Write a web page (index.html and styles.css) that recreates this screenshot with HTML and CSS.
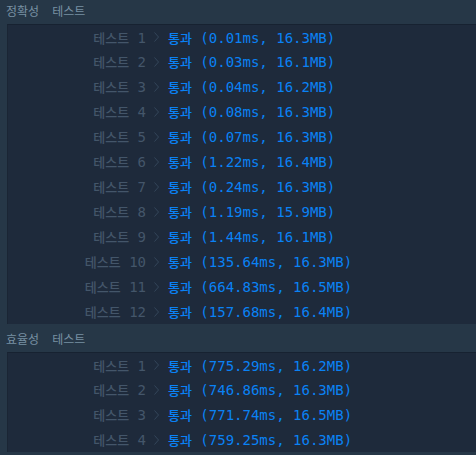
FILE: index.html
```html
<!DOCTYPE html>
<html lang="ko">
<head>
    <meta charset="UTF-8">
    <meta name="viewport" content="width=device-width, initial-scale=1.0">
    <title>채점 결과</title>
    <link rel="stylesheet" href="styles.css">
</head>
<body>
    <div class="result">
        <div class="section-title"><span>정확성</span><span>테스트</span></div>
        <div class="panel">
            <div class="row"><span class="label"><span class="ko">테스트</span> 1</span><svg class="chev" width="5" height="10" viewBox="0 0 5 10"><polyline points="0.5,0.5 4.5,5 0.5,9.5"/></svg><span class="pass"><span class="ko">통과</span> (0.01ms, 16.3MB)</span></div>
            <div class="row"><span class="label"><span class="ko">테스트</span> 2</span><svg class="chev" width="5" height="10" viewBox="0 0 5 10"><polyline points="0.5,0.5 4.5,5 0.5,9.5"/></svg><span class="pass"><span class="ko">통과</span> (0.03ms, 16.1MB)</span></div>
            <div class="row"><span class="label"><span class="ko">테스트</span> 3</span><svg class="chev" width="5" height="10" viewBox="0 0 5 10"><polyline points="0.5,0.5 4.5,5 0.5,9.5"/></svg><span class="pass"><span class="ko">통과</span> (0.04ms, 16.2MB)</span></div>
            <div class="row"><span class="label"><span class="ko">테스트</span> 4</span><svg class="chev" width="5" height="10" viewBox="0 0 5 10"><polyline points="0.5,0.5 4.5,5 0.5,9.5"/></svg><span class="pass"><span class="ko">통과</span> (0.08ms, 16.3MB)</span></div>
            <div class="row"><span class="label"><span class="ko">테스트</span> 5</span><svg class="chev" width="5" height="10" viewBox="0 0 5 10"><polyline points="0.5,0.5 4.5,5 0.5,9.5"/></svg><span class="pass"><span class="ko">통과</span> (0.07ms, 16.3MB)</span></div>
            <div class="row"><span class="label"><span class="ko">테스트</span> 6</span><svg class="chev" width="5" height="10" viewBox="0 0 5 10"><polyline points="0.5,0.5 4.5,5 0.5,9.5"/></svg><span class="pass"><span class="ko">통과</span> (1.22ms, 16.4MB)</span></div>
            <div class="row"><span class="label"><span class="ko">테스트</span> 7</span><svg class="chev" width="5" height="10" viewBox="0 0 5 10"><polyline points="0.5,0.5 4.5,5 0.5,9.5"/></svg><span class="pass"><span class="ko">통과</span> (0.24ms, 16.3MB)</span></div>
            <div class="row"><span class="label"><span class="ko">테스트</span> 8</span><svg class="chev" width="5" height="10" viewBox="0 0 5 10"><polyline points="0.5,0.5 4.5,5 0.5,9.5"/></svg><span class="pass"><span class="ko">통과</span> (1.19ms, 15.9MB)</span></div>
            <div class="row"><span class="label"><span class="ko">테스트</span> 9</span><svg class="chev" width="5" height="10" viewBox="0 0 5 10"><polyline points="0.5,0.5 4.5,5 0.5,9.5"/></svg><span class="pass"><span class="ko">통과</span> (1.44ms, 16.1MB)</span></div>
            <div class="row"><span class="label"><span class="ko">테스트</span> 10</span><svg class="chev" width="5" height="10" viewBox="0 0 5 10"><polyline points="0.5,0.5 4.5,5 0.5,9.5"/></svg><span class="pass"><span class="ko">통과</span> (135.64ms, 16.3MB)</span></div>
            <div class="row"><span class="label"><span class="ko">테스트</span> 11</span><svg class="chev" width="5" height="10" viewBox="0 0 5 10"><polyline points="0.5,0.5 4.5,5 0.5,9.5"/></svg><span class="pass"><span class="ko">통과</span> (664.83ms, 16.5MB)</span></div>
            <div class="row"><span class="label"><span class="ko">테스트</span> 12</span><svg class="chev" width="5" height="10" viewBox="0 0 5 10"><polyline points="0.5,0.5 4.5,5 0.5,9.5"/></svg><span class="pass"><span class="ko">통과</span> (157.68ms, 16.4MB)</span></div>
        </div>

        <div class="section-title"><span>효율성</span><span>테스트</span></div>
        <div class="panel">
            <div class="row"><span class="label"><span class="ko">테스트</span> 1</span><svg class="chev" width="5" height="10" viewBox="0 0 5 10"><polyline points="0.5,0.5 4.5,5 0.5,9.5"/></svg><span class="pass"><span class="ko">통과</span> (775.29ms, 16.2MB)</span></div>
            <div class="row"><span class="label"><span class="ko">테스트</span> 2</span><svg class="chev" width="5" height="10" viewBox="0 0 5 10"><polyline points="0.5,0.5 4.5,5 0.5,9.5"/></svg><span class="pass"><span class="ko">통과</span> (746.86ms, 16.3MB)</span></div>
            <div class="row"><span class="label"><span class="ko">테스트</span> 3</span><svg class="chev" width="5" height="10" viewBox="0 0 5 10"><polyline points="0.5,0.5 4.5,5 0.5,9.5"/></svg><span class="pass"><span class="ko">통과</span> (771.74ms, 16.5MB)</span></div>
            <div class="row"><span class="label"><span class="ko">테스트</span> 4</span><svg class="chev" width="5" height="10" viewBox="0 0 5 10"><polyline points="0.5,0.5 4.5,5 0.5,9.5"/></svg><span class="pass"><span class="ko">통과</span> (759.25ms, 16.3MB)</span></div>
        </div>
    </div>
</body>
</html>
```

FILE: styles.css
```css
* {
    margin: 0;
    padding: 0;
    box-sizing: border-box;
}
html, body {
    height: 100%;
}
body {
    background: #263747;
    overflow: hidden;
    font-family: "DejaVu Sans Mono", "Noto Sans CJK KR", monospace;
}
.result {
    margin-top: -4px;
}
.section-title {
    height: 28px;
    display: flex;
    align-items: center;
    gap: 13px;
    padding-left: 6px;
    font-family: "Noto Sans CJK KR", sans-serif;
    font-size: 12px;
    color: #7890a3;
}
.panel {
    margin-left: 7px;
    background: #1e2a3b;
    border-top: 1px solid #172231;
    border-left: 1px solid #1a2534;
}
.row {
    height: 25px;
    display: flex;
    align-items: center;
    font-size: 14px;
    white-space: nowrap;
}
.row:first-child {
    height: 24px;
}
.label {
    width: 138px;
    text-align: right;
    color: #44566a;
}
.ko {
    font-family: "Noto Sans CJK KR", sans-serif;
    font-size: 13px;
    font-weight: 500;
}
.chev {
    margin: 0 9px 0 8px;
    fill: none;
    stroke: #34465a;
    stroke-width: 1;
}
.pass {
    color: #0a82f5;
}
```
